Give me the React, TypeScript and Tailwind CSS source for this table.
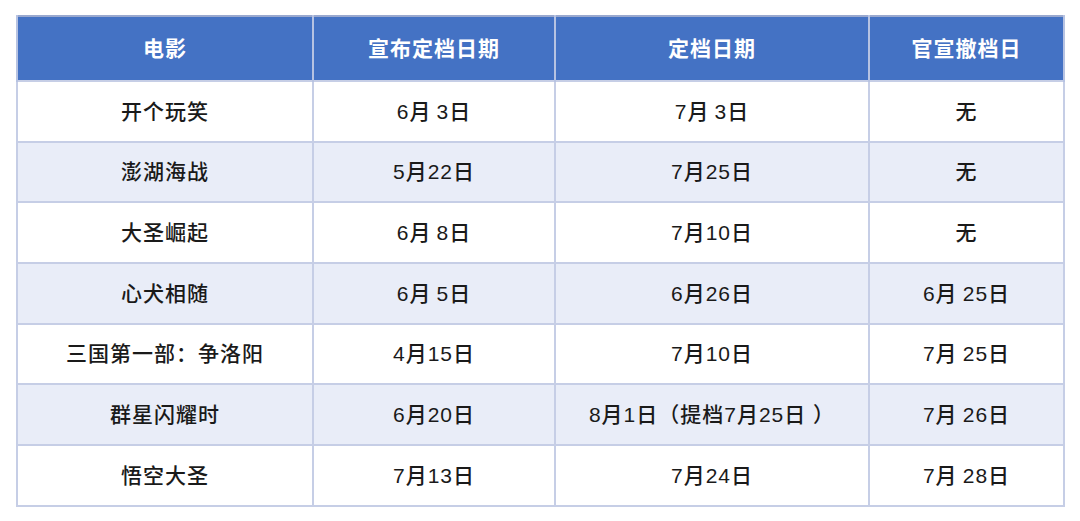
const rows: string[][] = [
  ["开个玩笑", "6月\u20093日", "7月\u20093日", "无"],
  ["澎湖海战", "5月22日", "7月25日", "无"],
  ["大圣崛起", "6月\u20098日", "7月10日", "无"],
  ["心犬相随", "6月\u20095日", "6月26日", "6月\u200925日"],
  ["三国第一部：争洛阳", "4月15日", "7月10日", "7月\u200925日"],
  ["群星闪耀时", "6月20日", "8月1日（提档7月25日 ）", "7月\u200926日"],
  ["悟空大圣", "7月13日", "7月24日", "7月\u200928日"],
];

const headers = ["电影", "宣布定档日期", "定档日期", "官宣撤档日"];

export default function App() {
  return (
    <div
      className="w-[1080px] h-[521px] bg-white pt-[15px] pl-[16px]"
      style={{ fontFamily: '"Liberation Sans", "Noto Sans CJK SC", sans-serif' }}
    >
      <table className="border-collapse border-2 border-[#9aa9cf] text-[21px] tracking-[1px] text-[#1a1a1a]">
        <colgroup>
          <col className="w-[296px]" />
          <col className="w-[242px]" />
          <col className="w-[314px]" />
          <col className="w-[195px]" />
        </colgroup>
        <thead>
          <tr className="h-[65px] bg-[#4472c4]">
            {headers.map((h) => (
              <th key={h} className="border-x-2 border-[#b7c3e2] text-white font-bold text-center p-0">
                {h}
              </th>
            ))}
          </tr>
        </thead>
        <tbody>
          {rows.map((r, i) => (
            <tr key={i} className={`h-[60.7px] ${i % 2 === 1 ? "bg-[#e9edf8]" : "bg-white"}`}>
              {r.map((c, j) => (
                <td key={j} className="border-2 border-[#c6cee6] text-center font-medium p-0 whitespace-nowrap">
                  {c}
                </td>
              ))}
            </tr>
          ))}
        </tbody>
      </table>
    </div>
  );
}
